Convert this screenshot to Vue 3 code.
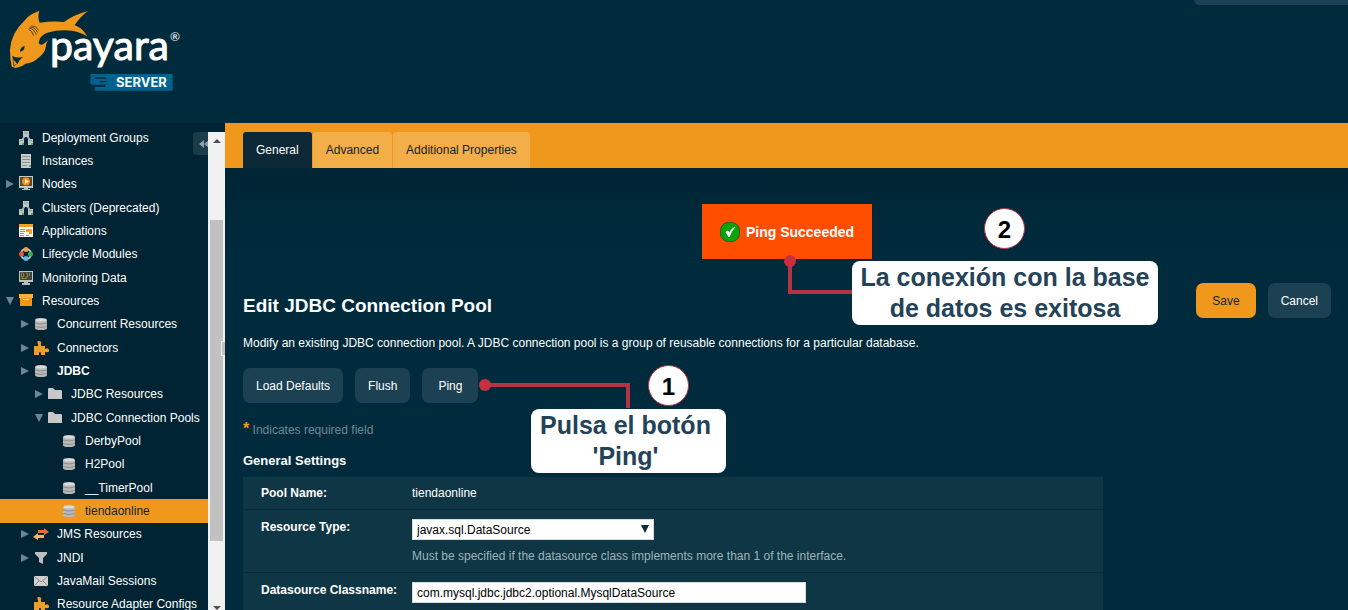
<script setup>
import { ref } from 'vue'

const nodes = [
  { label: 'Deployment Groups', icon: 'cluster', level: 0 },
  { label: 'Instances', icon: 'server', level: 0 },
  { label: 'Nodes', icon: 'node', level: 0, state: 'closed' },
  { label: 'Clusters (Deprecated)', icon: 'cluster', level: 0 },
  { label: 'Applications', icon: 'apps', level: 0 },
  { label: 'Lifecycle Modules', icon: 'lifecycle', level: 0 },
  { label: 'Monitoring Data', icon: 'monitor', level: 0 },
  { label: 'Resources', icon: 'box', level: 0, state: 'open' },
  { label: 'Concurrent Resources', icon: 'db', level: 1, state: 'closed' },
  { label: 'Connectors', icon: 'puzzle', level: 1, state: 'closed' },
  { label: 'JDBC', icon: 'db', level: 1, state: 'closed', strong: true },
  { label: 'JDBC Resources', icon: 'folder', level: 2, state: 'closed' },
  { label: 'JDBC Connection Pools', icon: 'folder', level: 2, state: 'open' },
  { label: 'DerbyPool', icon: 'db', level: 3 },
  { label: 'H2Pool', icon: 'db', level: 3 },
  { label: '__TimerPool', icon: 'db', level: 3 },
  { label: 'tiendaonline', icon: 'db', level: 3, selected: true },
  { label: 'JMS Resources', icon: 'arrows', level: 1, state: 'closed' },
  { label: 'JNDI', icon: 'funnel', level: 1, state: 'closed' },
  { label: 'JavaMail Sessions', icon: 'mail', level: 1 },
  { label: 'Resource Adapter Configs', icon: 'puzzle', level: 1 },
]
const tabs = ['General', 'Advanced', 'Additional Properties']
const activeTab = ref('General')
const resourceType = ref('javax.sql.DataSource')
const classname = ref('com.mysql.jdbc.jdbc2.optional.MysqlDataSource')
</script>

<template>
  <div class="console">
    <header class="masthead">
      <svg class="logo" viewBox="0 0 190 100" role="img" aria-label="Payara Server">
        <g transform="scale(.33333)">
          <path fill="#f0981b" d="M118 32 Q84 45 76 59 Q32 100 30 150 Q30 176 35 200 L46 204 Q66 200 76 191 Q100 188 112 176 Q134 160 137 143 Q138 130 144 121 Q134 131 126 134 Q117 136 116 127 Q120 106 142 98 Q176 88 216 92 Q238 95 262 109 Q246 82 224 76 Q240 50 264 33 Q222 44 192 66 Q158 63 119 68 Q112 50 118 32Z" />
          <path fill="#002b3c" d="M60 155 Q60 142 74 137 Q74 153 60 155Z M36 168 Q54 176 70 170 Q57 179 52 192 Q46 184 39 178Z" />
          <path fill="none" stroke="#002b3c" stroke-width="2" d="M87 84 Q102 86 109 104 M90 81 Q107 82 112 97 M94 78 Q110 78 115 91 M86 88 Q96 91 101 107 M39 179 L42 199 L50 191" />
          <path fill="#00638f" d="M275 222H518V272H284V261H316V254H275Q271 254 271 250V226Q271 222 275 222Z" />
          <path fill="#002b3c" d="M284 232H318V236H284Z M300 243H318V247H300Z" />
        </g>
        <text class="logo-name" x="50" y="60">payara</text>
        <text class="logo-mark" x="170" y="41">®</text>
        <text class="logo-product" x="116" y="87">SERVER</text>
      </svg>
      <div class="masthead-tools"></div>
    </header>

    <div class="workspace">
      <aside class="sidebar">
        <ul class="tree">
          <li v-for="n in nodes" :key="n.label" :class="['node', 'level' + n.level, { selected: n.selected, strong: n.strong }]">
            <svg class="twisty" viewBox="0 0 10 10" aria-hidden="true">
              <path v-if="n.state === 'closed'" d="M1 1L9 5L1 9Z" fill="#6b8694" />
              <path v-if="n.state === 'open'" d="M1 1H9L5 9Z" fill="#6b8694" />
            </svg>
            <svg class="icon" viewBox="0 0 16 16" aria-hidden="true">
              <g v-if="n.icon === 'cluster'">
                <path d="M7 6L4 10M9 6L12 10" stroke="#9aa3a6" stroke-width="2" fill="none" />
                <path d="M5 1h6v6H5ZM1 9h5v6H1ZM10 9h5v6h-5Z" fill="#bfc4c5" />
                <path d="M2 10.500h3M11 10.500h3M6 3h4" stroke="#8f989a" />
                <path d="M4 13h2v2H4ZM13 13h2v2h-2Z" fill="#46b04a" />
              </g>
              <g v-else-if="n.icon === 'server'">
                <path d="M3 1h10v14H3Z" fill="#c9cbca" /><path d="M4 3.500h8M4 6.500h8M4 9.500h8M4 12.500h5" stroke="#8d9391" /><path d="M11 12h2v2h-2Z" fill="#4bb04c" />
              </g>
              <g v-else-if="n.icon === 'node'">
                <path d="M1 0h14v12H1Z" fill="#c7c8c8" /><path d="M2 1h12v9H2Z" fill="#5b4933" /><path d="M6 12h4v1h2v1H4v-1h2Z" fill="#b9bbbb" /><circle cx="8" cy="5.500" r="4" fill="#f28c12" /><path d="M7 3L11 5.500L7 8Z" fill="#fff0c8" />
              </g>
              <g v-else-if="n.icon === 'apps'">
                <path d="M1 1h14v13H1Z" fill="#f8f4ec" /><path d="M1 1h14v3H1Z" fill="#f4a12a" /><path d="M2 6.500h5M2 8.500h5M2 10.500h4M2 12.500h4M8 12.500h3" stroke="#969696" /><path d="M8 6h6v5h-3V9H8Z" fill="#f4a12a" />
              </g>
              <g v-else-if="n.icon === 'lifecycle'">
                <circle cx="8" cy="8" r="5" fill="none" stroke="#ccd2d0" stroke-width="2" />
                <circle cx="8" cy="3.500" r="2.500" fill="#efa03c" /><circle cx="12.500" cy="8" r="2.500" fill="#35ae50" /><circle cx="8" cy="12.500" r="2.500" fill="#5bb9e8" /><circle cx="3.500" cy="8" r="2.500" fill="#e55733" />
              </g>
              <g v-else-if="n.icon === 'monitor'">
                <path d="M1 1h14v11H1Z" fill="#bfc2c3" /><path d="M2 2h12v8H2Z" fill="#3e4542" /><path d="M6 12h4v1h2v2H4v-2h2Z" fill="#b8babb" /><path d="M3.500 3v4h2V3H3M7.500 3h2v4H7M11.500 3v3M3 8.500h6" stroke="#8f7f2c" fill="none" />
              </g>
              <g v-else-if="n.icon === 'box'">
                <path d="M1 1h14v4H1Z" fill="#ffb038" /><path d="M2 5h12v8H2Z" fill="#f0961c" /><path d="M5 6h6v1H5Z" fill="#ffe1ad" />
              </g>
              <g v-else-if="n.icon === 'db'">
                <path d="M2 4Q2 2 8 2T14 4V12Q14 14 8 14T2 12Z" fill="#bbb9b8" /><ellipse cx="8" cy="4" rx="5" ry="1.500" fill="#dddcda" /><path d="M2 7Q8 9 14 7M2 10.500Q8 12.500 14 10.500" stroke="#8b9091" fill="none" />
              </g>
              <path v-else-if="n.icon === 'puzzle'" d="M1 6h4V4Q3 1 6 1T8 4V6h4v3q3-2 4 1t-4 2v3H8v-2q-1-2-2 0v2H1Z" fill="#f09c2c" />
              <path v-else-if="n.icon === 'folder'" d="M1 3Q1 2 2 2H6L8 4H14L15 5V13H1Z" fill="#c9c7c7" />
              <g v-else-if="n.icon === 'arrows'">
                <path d="M5 4h6V2L16 6L11 9V7H5Z" fill="#ec6a3c" /><path d="M11 9H5V7L0 11L5 14V12H11Z" fill="#f3b75c" />
              </g>
              <path v-else-if="n.icon === 'funnel'" d="M2 2H14V4L10 8V14L6 12V8L2 4Z" fill="#bcbfc0" />
              <g v-else-if="n.icon === 'mail'">
                <path d="M1 3H15V13H1Z" fill="#d1d0ce" /><path d="M1 3L8 9L15 3M1 13L6 8M15 13L10 8" stroke="#8a8e8f" fill="none" />
              </g>
            </svg>
            <a href="#" class="label">{{ n.label }}</a>
          </li>
        </ul>
        <button class="collapse" type="button" aria-label="Collapse">
          <svg viewBox="0 0 10 10" aria-hidden="true"><path d="M5 1V9L0 5ZM10 1V9L5 5Z" fill="#92a1a8" /></svg>
        </button>
        <div class="scroll">
          <svg class="scroll-arrow" viewBox="0 0 8 8" aria-hidden="true"><path d="M0 6L4 2L8 6Z" fill="#505050" /></svg>
          <div class="thumb"></div>
          <svg class="scroll-arrow" viewBox="0 0 8 8" aria-hidden="true"><path d="M0 4L4 8L8 4Z" fill="#505050" /></svg>
        </div>
        <div class="splitter"></div>
      </aside>

      <main class="main">
        <nav class="tabs">
          <a v-for="t in tabs" :key="t" href="#" :class="['tab', { active: t === activeTab }]" @click.prevent="activeTab = t">{{ t }}</a>
        </nav>

        <section class="content">
          <div class="alert" role="status">
            <svg viewBox="0 0 20 20" aria-hidden="true"><rect x="0.5" y="0.5" width="19" height="19" rx="8" fill="#0aa30a" stroke="#245f12" /><path d="M6 10L8 9L9 12Q11 7 15 5Q11 9 9 15Z" fill="#fff" stroke="#fff" /></svg>
            <span>Ping Succeeded</span>
          </div>

          <div class="title-row">
            <h1>Edit JDBC Connection Pool</h1>
            <div class="page-actions">
              <button type="button" class="btn wide save">Save</button>
              <button type="button" class="btn">Cancel</button>
            </div>
          </div>
          <p class="intro">Modify an existing JDBC connection pool. A JDBC connection pool is a group of reusable connections for a particular database.</p>
          <div class="actions">
            <button type="button" class="btn">Load Defaults</button>
            <button type="button" class="btn">Flush</button>
            <button type="button" class="btn wide">Ping</button>
          </div>
          <p class="required"><span class="star">*</span> Indicates required field</p>
          <h2>General Settings</h2>

          <div class="settings">
            <div class="setting">
              <span class="name">Pool Name:</span>
              <span>tiendaonline</span>
            </div>
            <div class="setting field">
              <label class="name" for="rtype">Resource Type:</label>
              <div>
                <div class="select">
                  <select id="rtype" v-model="resourceType"><option>javax.sql.DataSource</option></select>
                  <svg viewBox="0 0 8 8" aria-hidden="true"><path d="M0 0H8L4 8Z" fill="#0c2a38" /></svg>
                </div>
                <p class="help">Must be specified if the datasource class implements more than 1 of the interface.</p>
              </div>
            </div>
            <div class="setting field">
              <label class="name" for="dsclass">Datasource Classname:</label>
              <input id="dsclass" v-model="classname" type="text" />
            </div>
          </div>
        </section>

        <svg class="wire wire-ping" viewBox="0 0 154 30" aria-hidden="true"><path d="M6 7H149V30" fill="none" stroke="#b33444" stroke-width="4" /><circle cx="6" cy="7" r="6" fill="#c8303f" /></svg>
        <div class="step step-one">1</div>
        <div class="note note-one">Pulsa el botón<br />'Ping'</div>
        <svg class="wire wire-alert" viewBox="0 0 68 40" aria-hidden="true"><path d="M6 6V37H68" fill="none" stroke="#b33444" stroke-width="4" /><circle cx="6" cy="6" r="6" fill="#c8303f" /></svg>
        <div class="step step-two">2</div>
        <div class="note note-two">La conexión con la base<br />de datos es exitosa</div>
      </main>
    </div>
  </div>
</template>

<style>
html, body { background: #002b3c; }
body { overflow: hidden; }
</style>

<style scoped>
* { box-sizing: border-box; }
.console { height: 100vh; display: flex; flex-direction: column; overflow: hidden; font: 12px/16px "Liberation Sans", Arial, sans-serif; color: #fff; background: #002b3c; }
.masthead { flex: none; height: 123px; display: flex; justify-content: space-between; align-items: flex-start; }
.logo { width: 190px; height: 100px; }
.logo-name { font: 400 41px Lato, sans-serif; fill: #fff; stroke: #fff; stroke-width: 1; }
.logo-mark { font: 400 12px Lato, sans-serif; fill: #fff; }
.logo-product { font: 700 13px Inter, sans-serif; fill: #fff; }
.masthead-tools { width: 154px; height: 5px; background: #1b4152; border-bottom-left-radius: 6px; }
.workspace { flex: 1; min-height: 0; display: flex; overflow: hidden; }

.sidebar { position: relative; flex: none; width: 225px; display: flex; background: #002433; }
.tree { flex: 1; height: 493px; margin: 0; padding: 3px 0 0; list-style: none; display: flex; flex-direction: column; min-width: 0; }
.node { flex: 1; display: flex; align-items: center; white-space: nowrap; padding-left: 5px; }
.level1 { padding-left: 20px; }
.level2 { padding-left: 34px; }
.level3 { padding-left: 48px; }
.twisty { width: 10px; height: 10px; flex: none; }
.icon { width: 16px; height: 16px; margin: 0 8px 0 3px; flex: none; }
.label { color: #fff; text-decoration: none; }
.strong .label { font-weight: 700; }
.selected { background: #f0981b; }
.selected .label { color: #10262e; }
.collapse { position: absolute; left: 193px; top: 9px; width: 16px; height: 23px; padding: 0 0 0 6px; border: 0; border-radius: 3px 0 0 3px; background: #1b3c4a; overflow: hidden; }
.collapse svg { display: block; width: 10px; height: 10px; }
.scroll { position: relative; width: 17px; margin-top: 9px; background: #f1f1f1; display: flex; flex-direction: column; justify-content: space-between; align-items: center; padding: 5px 0 0; }
.scroll-arrow { width: 8px; height: 8px; }
.thumb { position: absolute; top: 88px; left: 2px; right: 2px; height: 321px; background: #c1c1c1; }
.splitter { position: absolute; right: 0; top: 218px; width: 4px; height: 15px; background: #c1c1c1; border: 1px solid #f1f1f1; border-right: 0; }

.main { position: relative; flex: 1; min-width: 0; background: linear-gradient(#002535 45px, #002b3c 130px); }
.tabs { height: 45px; display: flex; align-items: flex-end; gap: 1px; padding-left: 18px; background: #f0981b; }
.tab { height: 36px; line-height: 36px; padding: 0 13px; border-radius: 3px 3px 0 0; background: #f3ad49; color: #10262e; text-decoration: none; }
.tab.active { background: #0c2735; color: #fff; }
.content { padding: 36px 17px 0 18px; display: flex; flex-direction: column; }
.alert { align-self: center; height: 55px; padding: 0 18px; display: flex; align-items: center; gap: 6px; background: #ff4e00; font-size: 14px; font-weight: 700; }
.alert svg { width: 20px; height: 20px; }
.title-row { display: flex; justify-content: space-between; align-items: flex-start; margin-top: 24px; }
h1 { margin: 11px 0 0; font-size: 19px; line-height: 24px; }
.page-actions, .actions { display: flex; gap: 12px; }
.btn { height: 35px; padding: 0 13px; border: 0; border-radius: 7px; background: #1b4152; color: #fff; font: inherit; }
.wide { padding: 0 16px; }
.save { background: #f0981b; color: #10262e; }
.intro { margin: 17px 0; }
.required { margin: 19px 0 0; color: #6f8994; }
.star { color: #f0981b; font-size: 16px; font-weight: 700; line-height: 12px; }
h2 { margin: 15px 0 8px; font-size: 13px; line-height: 16px; }
.settings { width: 79%; background: #0f3645; }
.setting { display: grid; grid-template-columns: 151px 1fr; padding: 8px 18px; border-bottom: 1px solid #062b3b; }
.field { padding-top: 9px; }
.name { font-weight: 700; }
.select { position: relative; width: 242px; }
.select svg { position: absolute; right: 5px; top: 6px; width: 8px; height: 8px; }
select, input { display: block; height: 21px; padding: 0 4px; border: 1px solid #d8dcde; border-radius: 0; background: #fff; color: #000; font: inherit; appearance: none; }
select { width: 100%; }
input { width: 394px; }
.help { margin: 8px 0 0; color: #9db4bb; }

.wire, .step, .note { position: absolute; }
.wire-ping { left: 254px; top: 255px; width: 154px; height: 30px; }
.wire-alert { left: 559px; top: 132px; width: 68px; height: 40px; }
.step { width: 41px; height: 41px; border: 1px solid #b33444; border-radius: 50%; background: #fff; color: #000; font-size: 24px; font-weight: 700; line-height: 41px; text-align: center; }
.step-one { left: 423px; top: 242px; }
.step-two { left: 759px; top: 85px; }
.note { padding: 1px 8px; border-radius: 8px; background: #fff; color: #244258; font-size: 25px; line-height: 31px; font-weight: 700; text-align: center; white-space: nowrap; }
.note-one { left: 306px; top: 286px; width: 195px; padding-right: 14px; }
.note-two { left: 627px; top: 138px; width: 306px; }
</style>
